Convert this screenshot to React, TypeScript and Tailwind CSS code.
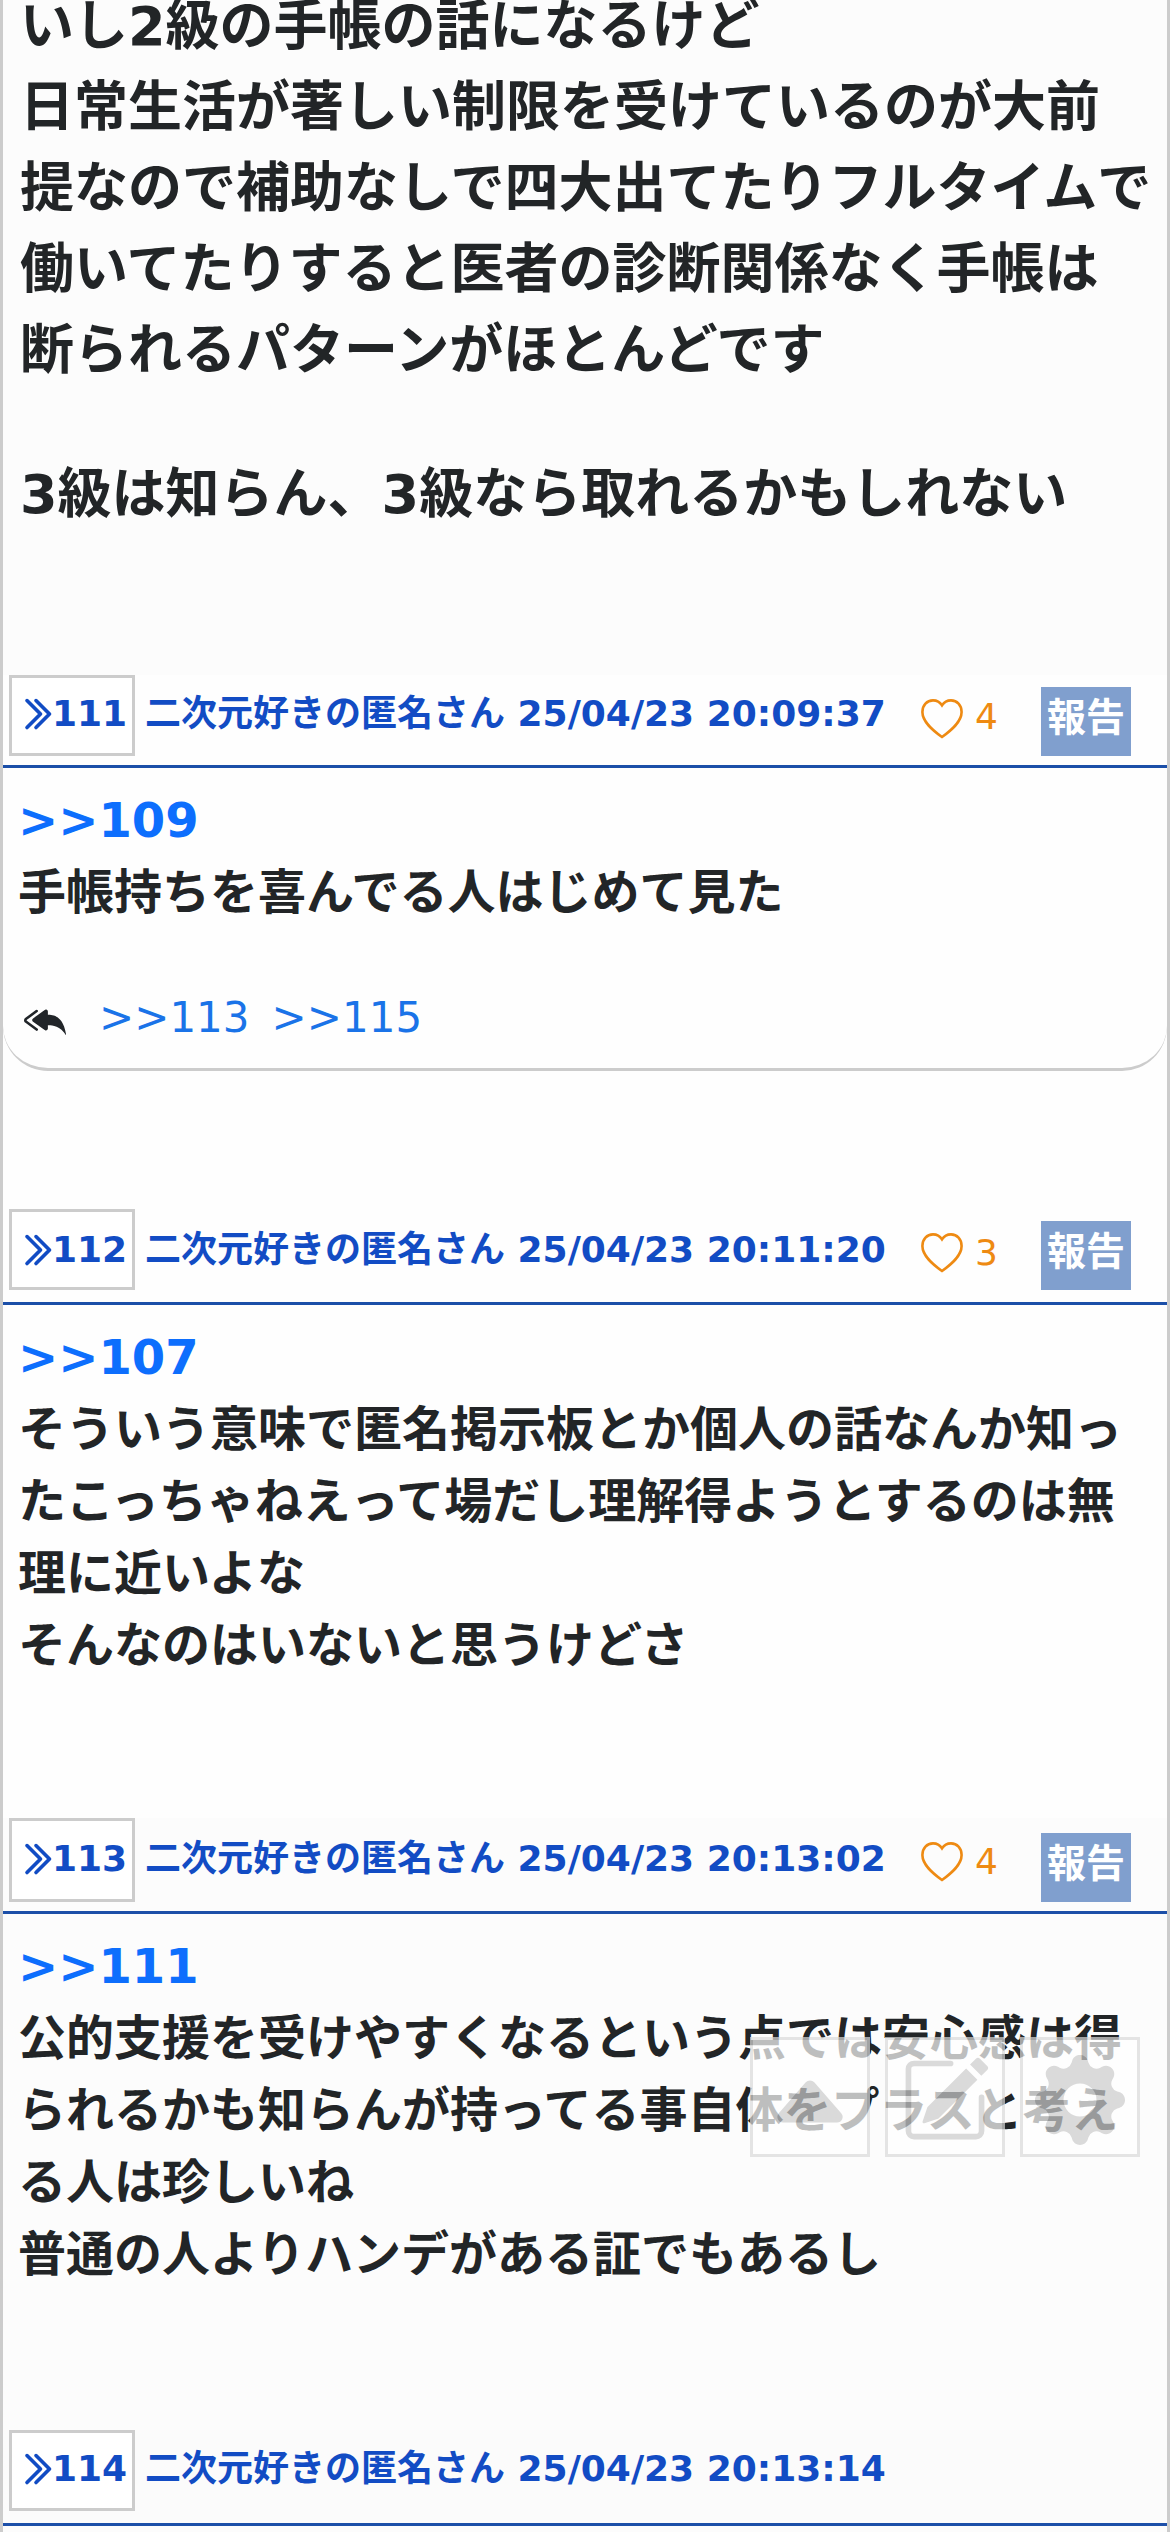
import type { ReactNode } from "react"
import { clsx } from "clsx"
import {
  BsCaretUpFill,
  BsChevronDoubleRight,
  BsGearFill,
  BsPencilSquare,
  BsReplyAllFill,
} from "react-icons/bs"

type HeaderProps = {
  no: number
  date: string
  likes?: number
  className?: string
  boxClass?: string
  textClass?: string
  reportClass?: string
}

function Heart() {
  return (
    <svg viewBox="0 0 42 40" fill="none" stroke="currentColor" strokeWidth="2.6" className="mt-[9px] h-10 w-[42px]">
      <path d="M21 38C12 31.5 1.4 23 1.4 13 1.4 6 6 1.4 12 1.4c4 0 7 1.8 9 5 2-3.200 5-5 9-5C36 1.4 40.600 6 40.600 13 40.600 23 30 31.500 21 38Z" />
    </svg>
  )
}

function PostHeader({
  no,
  date,
  likes,
  className = "h-24",
  boxClass = "h-[81px]",
  textClass = "mt-0.5",
  reportClass = "mt-3",
}: HeaderProps) {
  return (
    <div
      className={clsx(
        "flex items-start border-b-3 border-[#1c4fa8] pl-1.5 text-[36px] leading-[54px] font-bold text-[#124cc4]",
        className
      )}
    >
      <div className={clsx("w-[126px] shrink-0 border-3 border-[#ccc] bg-white pt-[9px] pl-1.5", boxClass)}>
        <div className={clsx("flex items-start", textClass)}>
          <BsChevronDoubleRight className="mt-[9px] size-9 shrink-0 stroke-[0.6]" />
          <span className="-ml-0.5">{no}</span>
        </div>
      </div>
      <div className="pt-3 pl-2.5 whitespace-nowrap">
        <p className={textClass}>二次元好きの匿名さん {date}</p>
      </div>
      {likes !== undefined && (
        <div className="ml-auto flex items-start pr-9">
          <div className="flex items-start pt-[15px] font-normal text-[#ee8a12]">
            <Heart />
            <span className={clsx("ml-3", textClass)}>{likes}</span>
          </div>
          <button
            className={clsx(
              "ml-[43px] h-[69px] w-[90px] bg-[#809fce] pb-2 text-[39px] leading-[61px] font-bold text-white",
              reportClass
            )}
          >
            報告
          </button>
        </div>
      )}
    </div>
  )
}

function Post({ anchor, children }: { anchor: string; children: ReactNode }) {
  return (
    <div className="pt-4 pl-[15px] text-[48px] leading-[72px] font-bold whitespace-nowrap text-[#222527]">
      <a className="block text-[#0d6efd]">{anchor}</a>
      {children}
    </div>
  )
}

function FloatButton({ children }: { children: ReactNode }) {
  return (
    <button className="flex size-[120px] justify-center border-3 border-[#dadada] bg-white pt-[15px] text-[90px] text-[#ccc] opacity-70">
      {children}
    </button>
  )
}

export default function App() {
  return (
    <main
      lang="ja"
      className="relative h-[2532px] w-[1170px] overflow-hidden border-x-3 border-[#ccc] bg-[#fcfcfc] font-['DejaVu_Sans','Noto_Sans_CJK_JP',sans-serif]"
    >
      <section className="flex h-[675px] flex-col pl-[17px] text-[54px] leading-[81px] font-bold whitespace-nowrap text-[#222527]">
        <p className="-mt-[14px]">いし2級の手帳の話になるけど</p>
        <p>日常生活が著しい制限を受けているのが大前</p>
        <p>提なので補助なしで四大出てたりフルタイムで</p>
        <p>働いてたりすると医者の診断関係なく手帳は</p>
        <p>断られるパターンがほとんどです</p>
        <p className="mt-[63px]">3級は知らん、3級なら取れるかもしれない</p>
      </section>

      <section className="h-[534px] bg-[#fefefe]">
        <PostHeader no={111} date="25/04/23 20:09:37" likes={4} className="h-[93px]" textClass="mt-0" />
        <div className="h-[303px] rounded-b-[45px] border-b-3 border-[#ccc]">
          <Post anchor=">>109">
            <p>手帳持ちを喜んでる人はじめて見た</p>
          </Post>
          <div className="mt-[58px] flex items-center pl-[21px] text-[42px] leading-[63px]">
            <BsReplyAllFill className="mt-1 size-[42px] text-[#212529]" />
            <div className="ml-[33px] flex gap-[22px] text-[#1a73e8]">
              <a>{">>113"}</a>
              <a>{">>115"}</a>
            </div>
          </div>
        </div>
      </section>

      <section className="h-[609px] bg-[#fefefe]">
        <PostHeader no={112} date="25/04/23 20:11:20" likes={3} />
        <Post anchor=">>107">
          <p>そういう意味で匿名掲示板とか個人の話なんか知っ</p>
          <p>たこっちゃねえって場だし理解得ようとするのは無</p>
          <p>理に近いよな</p>
          <p>そんなのはいないと思うけどさ</p>
        </Post>
      </section>

      <section className="h-[612px]">
        <PostHeader
          no={113}
          date="25/04/23 20:13:02"
          likes={4}
          boxClass="h-[84px]"
          reportClass="mt-[15px]"
        />
        <Post anchor=">>111">
          <p>公的支援を受けやすくなるという点では安心感は得</p>
          <p>られるかも知らんが持ってる事自体をプラスと考え</p>
          <p>る人は珍しいね</p>
          <p>普通の人よりハンデがある証でもあるし</p>
        </Post>
      </section>

      <section className="bg-[#fbfbfb]">
        <PostHeader no={114} date="25/04/23 20:13:14" textClass="mt-0" />
      </section>

      <div className="absolute top-[2037px] right-[27px] flex gap-[15px]">
        <FloatButton>
          <BsCaretUpFill />
        </FloatButton>
        <FloatButton>
          <BsPencilSquare />
        </FloatButton>
        <FloatButton>
          <BsGearFill />
        </FloatButton>
      </div>
    </main>
  )
}
